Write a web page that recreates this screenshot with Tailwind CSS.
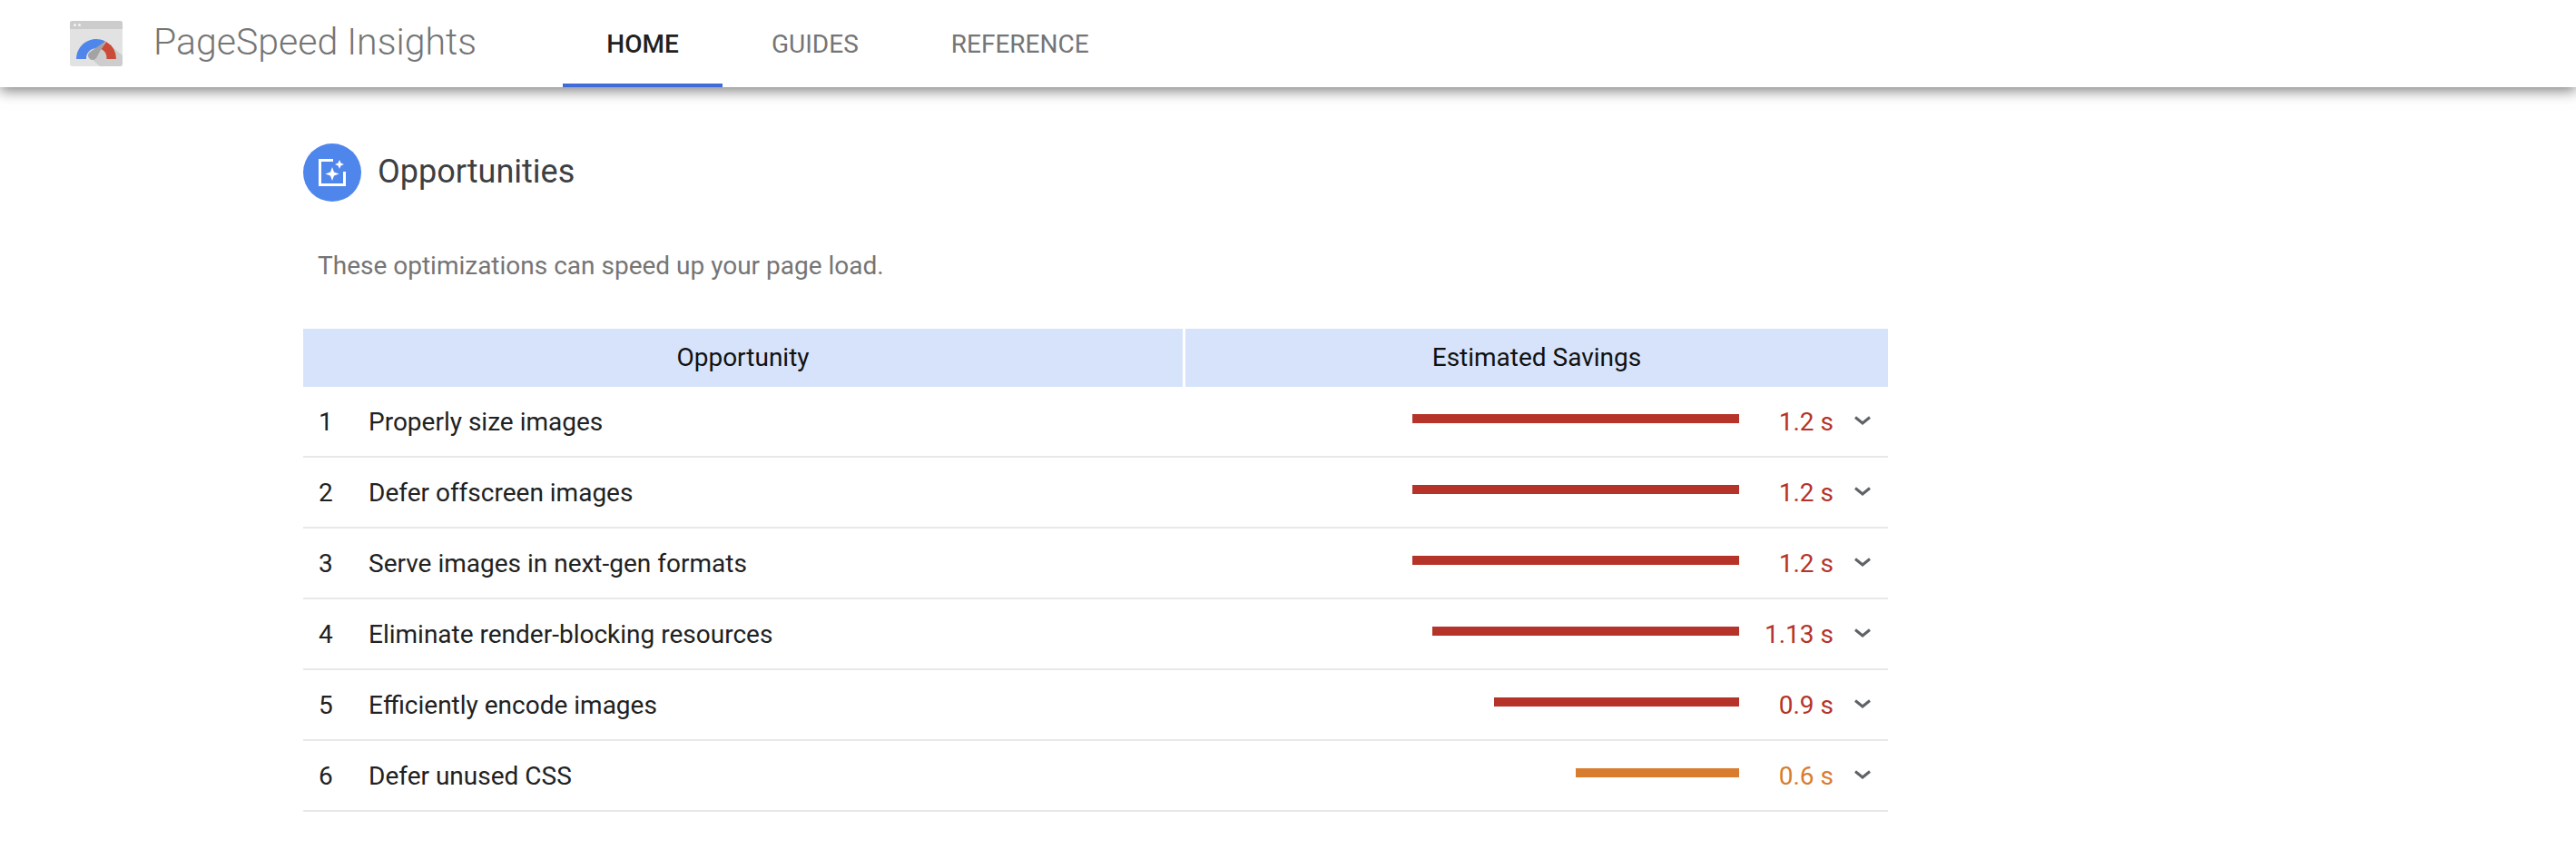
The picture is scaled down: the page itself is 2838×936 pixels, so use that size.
<!DOCTYPE html>
<html lang="en">
<head>
    <meta charset="UTF-8">
    <meta name="viewport" content="width=device-width, initial-scale=1.0">
    <title>PageSpeed Insights</title>
    <script src="https://cdn.jsdelivr.net/npm/@tailwindcss/browser@4"></script>
</head>
<body class="bg-white font-['Roboto',sans-serif] overflow-hidden">
    <!-- top bar -->
    <header class="relative z-10 flex h-[96px] items-stretch bg-white pl-[77px] shadow-[0_4px_14px_rgba(0,0,0,0.5)]">
        <svg class="mt-[23px] h-[50px] w-[58px] shrink-0" viewBox="0 0 58 50">
            <rect width="58" height="50" rx="3" fill="#e2e2e2"/>
            <path d="M0 9V3a3 3 0 0 1 3-3h52a3 3 0 0 1 3 3v6z" fill="#cccccc"/>
            <circle cx="5.500" cy="4.500" r="1.500" fill="#f5f5f5"/>
            <circle cx="10.500" cy="4.500" r="1.500" fill="#f5f5f5"/>
            <path d="M23 41L39 23L58 38V47a3 3 0 0 1-3 3H33z" fill="#cdcdcd"/>
            <path d="M7 42a22 22 0 0 1 32-19.500L33 31a11 11 0 0 0-15 11z" fill="#4f86ec"/>
            <path d="M40 23a22 22 0 0 1 11 19H40.500a11 11 0 0 0-6-11z" fill="#cb4b39"/>
            <path d="M39.500 22L29 41a5 5 0 0 1-8-6z" fill="#a3a3a3"/>
        </svg>
        <div class="ml-[34px] flex w-[451px] items-center pb-[2px] text-[41px] font-light text-[#757575]">PageSpeed Insights</div>
        <nav class="flex gap-[6px] text-[28px]">
            <a class="flex w-[176px] items-center justify-center border-b-4 border-[#3f6ad8] pt-[6px] font-medium text-[#212121]">HOME</a>
            <a class="flex items-center border-b-4 border-transparent px-12 pt-[6px] text-[#757575]">GUIDES</a>
            <a class="flex items-center border-b-4 border-transparent px-12 pt-[6px] text-[#757575]">REFERENCE</a>
        </nav>
    </header>

    <main class="ml-[334px] w-[1746px]">
        <div class="mt-[62px] flex items-center gap-[18px]">
            <svg class="h-16 w-16" viewBox="0 0 64 64">
                <circle cx="32" cy="32" r="32" fill="#4f86ec"/>
                <path d="M33 18.500H18.500V45.500H45.500V31" fill="none" stroke="#fff" stroke-width="3"/>
                <path d="M32 26l2 5.500 5.500 2-5.500 2-2 5.500-2-5.500-5.500-2 5.500-2z" fill="#fff"/>
                <path d="M40 18l1.500 3.500 3.500 1.500-3.500 1.500-1.500 3.500-1.500-3.500-3.500-1.500 3.500-1.500z" fill="#fff"/>
            </svg>
            <h2 class="pb-[2px] text-[36px] text-[#3c4043]">Opportunities</h2>
        </div>

        <p class="mt-[51px] pl-[16px] text-[28px] leading-[40px] text-[#757575]">These optimizations can speed up your page load.</p>

        <div class="mt-[49px] flex h-16 gap-[3px] text-[28px] text-[#111111]">
            <div class="flex w-[969px] items-center justify-center bg-[#d6e3fb]">Opportunity</div>
            <div class="flex flex-1 items-center justify-center bg-[#d6e3fb]">Estimated Savings</div>
        </div>

        <div class="flex h-[78px] items-center border-b-2 border-[#e8e8e8] text-[28px] text-[#212121]">
            <div class="w-[72px] pl-[17px] pt-[2px]">1</div>
            <div class="flex-1 pt-[2px]">Properly size images</div>
            <div class="mb-[6px] h-[10px] w-[360px] bg-[#b53329]"></div>
            <div class="w-[104px] pt-[2px] text-right text-[#b53329]">1.2 s</div>
            <svg class="ml-[23px] mr-[19px] mb-[2px] h-[10px] w-[18px]" viewBox="0 0 18 10"><path d="M1 1.500l8 6.500 8-6.500" fill="none" stroke="#5f6368" stroke-width="3"/></svg>
        </div>
        <div class="flex h-[78px] items-center border-b-2 border-[#e8e8e8] text-[28px] text-[#212121]">
            <div class="w-[72px] pl-[17px] pt-[2px]">2</div>
            <div class="flex-1 pt-[2px]">Defer offscreen images</div>
            <div class="mb-[6px] h-[10px] w-[360px] bg-[#b53329]"></div>
            <div class="w-[104px] pt-[2px] text-right text-[#b53329]">1.2 s</div>
            <svg class="ml-[23px] mr-[19px] mb-[2px] h-[10px] w-[18px]" viewBox="0 0 18 10"><path d="M1 1.500l8 6.500 8-6.500" fill="none" stroke="#5f6368" stroke-width="3"/></svg>
        </div>
        <div class="flex h-[78px] items-center border-b-2 border-[#e8e8e8] text-[28px] text-[#212121]">
            <div class="w-[72px] pl-[17px] pt-[2px]">3</div>
            <div class="flex-1 pt-[2px]">Serve images in next-gen formats</div>
            <div class="mb-[6px] h-[10px] w-[360px] bg-[#b53329]"></div>
            <div class="w-[104px] pt-[2px] text-right text-[#b53329]">1.2 s</div>
            <svg class="ml-[23px] mr-[19px] mb-[2px] h-[10px] w-[18px]" viewBox="0 0 18 10"><path d="M1 1.500l8 6.500 8-6.500" fill="none" stroke="#5f6368" stroke-width="3"/></svg>
        </div>
        <div class="flex h-[78px] items-center border-b-2 border-[#e8e8e8] text-[28px] text-[#212121]">
            <div class="w-[72px] pl-[17px] pt-[2px]">4</div>
            <div class="flex-1 pt-[2px]">Eliminate render-blocking resources</div>
            <div class="mb-[6px] h-[10px] w-[338px] bg-[#b53329]"></div>
            <div class="w-[104px] pt-[2px] text-right text-[#b53329]">1.13 s</div>
            <svg class="ml-[23px] mr-[19px] mb-[2px] h-[10px] w-[18px]" viewBox="0 0 18 10"><path d="M1 1.500l8 6.500 8-6.500" fill="none" stroke="#5f6368" stroke-width="3"/></svg>
        </div>
        <div class="flex h-[78px] items-center border-b-2 border-[#e8e8e8] text-[28px] text-[#212121]">
            <div class="w-[72px] pl-[17px] pt-[2px]">5</div>
            <div class="flex-1 pt-[2px]">Efficiently encode images</div>
            <div class="mb-[6px] h-[10px] w-[270px] bg-[#b53329]"></div>
            <div class="w-[104px] pt-[2px] text-right text-[#b53329]">0.9 s</div>
            <svg class="ml-[23px] mr-[19px] mb-[2px] h-[10px] w-[18px]" viewBox="0 0 18 10"><path d="M1 1.500l8 6.500 8-6.500" fill="none" stroke="#5f6368" stroke-width="3"/></svg>
        </div>
        <div class="flex h-[78px] items-center border-b-2 border-[#e8e8e8] text-[28px] text-[#212121]">
            <div class="w-[72px] pl-[17px] pt-[2px]">6</div>
            <div class="flex-1 pt-[2px]">Defer unused CSS</div>
            <div class="mb-[6px] h-[10px] w-[180px] bg-[#d87c2e]"></div>
            <div class="w-[104px] pt-[2px] text-right text-[#d87c2e]">0.6 s</div>
            <svg class="ml-[23px] mr-[19px] mb-[2px] h-[10px] w-[18px]" viewBox="0 0 18 10"><path d="M1 1.500l8 6.500 8-6.500" fill="none" stroke="#5f6368" stroke-width="3"/></svg>
        </div>
    </main>
</body>
</html>
